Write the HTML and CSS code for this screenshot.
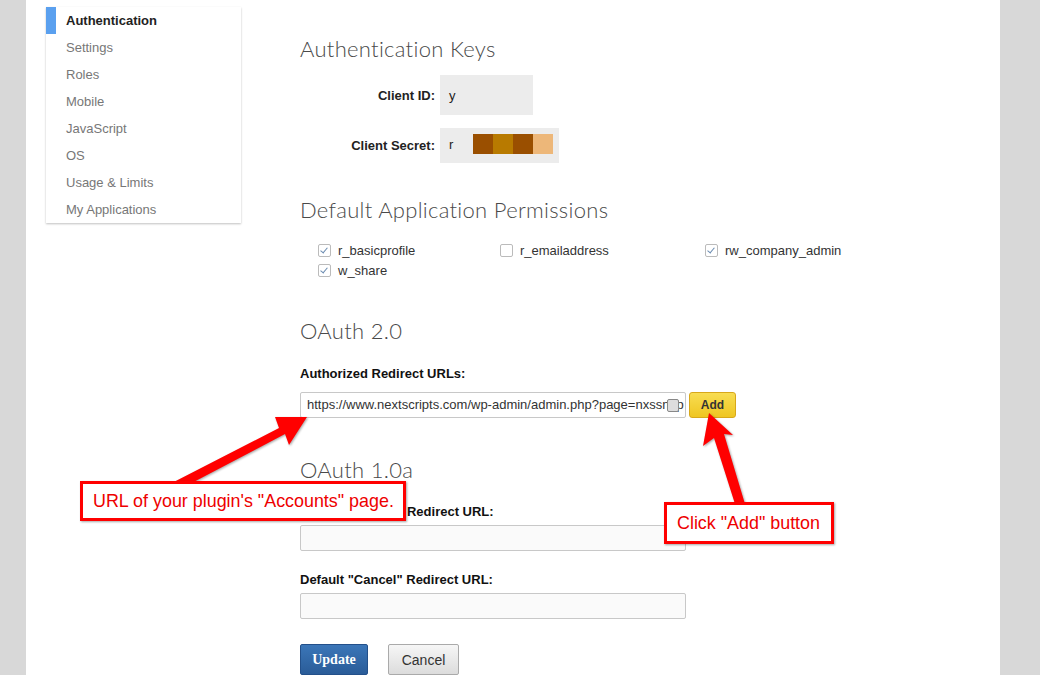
FILE: index.html
```html
<!DOCTYPE html>
<html lang="en">
<head>
  <meta charset="UTF-8">
  <title>Authentication</title>
  <link rel="stylesheet" href="styles.css">
</head>
<body>
  <div class="page">
    <!-- left menu -->
    <div class="sidebar">
      <a class="nav-item active">Authentication</a>
      <a class="nav-item">Settings</a>
      <a class="nav-item">Roles</a>
      <a class="nav-item">Mobile</a>
      <a class="nav-item">JavaScript</a>
      <a class="nav-item">OS</a>
      <a class="nav-item">Usage &amp; Limits</a>
      <a class="nav-item">My Applications</a>
    </div>

    <div class="main">
      <h2>Authentication Keys</h2>
      <div class="key-row">
        <span class="key-label">Client ID:</span>
        <div class="key-value id-value"><span class="masked">y</span></div>
      </div>
      <div class="key-row">
        <span class="key-label">Client Secret:</span>
        <div class="key-value secret-value">
          <span class="masked">r</span>
          <span class="px" style="background:#9a4f00"></span><span class="px" style="background:#b87a00"></span><span class="px" style="background:#9a4f00"></span><span class="px" style="background:#edb779"></span>
        </div>
      </div>

      <h2 class="perm-title">Default Application Permissions</h2>
      <div class="perms">
        <label class="perm"><span class="box checked"></span>r_basicprofile</label>
        <label class="perm"><span class="box"></span>r_emailaddress</label>
        <label class="perm"><span class="box checked"></span>rw_company_admin</label>
        <label class="perm"><span class="box checked"></span>w_share</label>
      </div>

      <h2 class="oauth2">OAuth 2.0</h2>
      <div class="field-label">Authorized Redirect URLs:</div>
      <div class="url-row">
        <div class="input filled">https://www.nextscripts.com/wp-admin/admin.php?page=nxssnap<span class="pick"></span></div>
        <button class="btn-add">Add</button>
      </div>

      <h2 class="oauth1">OAuth 1.0a</h2>
      <div class="field-label accept">Default "Accept" Redirect URL:</div>
      <div class="input"></div>
      <div class="field-label second">Default "Cancel" Redirect URL:</div>
      <div class="input"></div>

      <div class="actions">
        <button class="btn-update">Update</button>
        <button class="btn-cancel">Cancel</button>
      </div>
    </div>
  </div>

  <!-- annotations drawn over the screenshot -->
  <svg class="arrows" width="1040" height="675" viewBox="0 0 1040 675">
    <g fill="#ff0000" style="filter: drop-shadow(1px 1px 1px rgba(0,0,0,0.35))">
      <polygon points="166,486 279,428 275,417 307,417 289,445 285,434 186,486"/>
      <polygon points="709,413 733,435 724,434 745,504 735,504 714,438 703,446"/>
    </g>
  </svg>
  <div class="callout callout-url">URL of your plugin's "Accounts" page.</div>
  <div class="callout callout-add">Click "Add" button</div>
</body>
</html>
```

FILE: styles.css
```css
body {
  margin: 0;
  background: #d8d8d8;
  font-family: Arial, "Liberation Sans", sans-serif;
  font-size: 13px;
  color: #222;
  overflow: hidden;
}

.page {
  display: flex;
  align-items: flex-start;
  margin-left: 26px;
  width: 974px;
  height: 675px;
  background: #fff;
}

/* sidebar */
.sidebar {
  display: flex;
  flex-direction: column;
  width: 195px;
  margin: 7px 0 0 20px;
  background: #fff;
  box-shadow: 0 1px 2px rgba(0, 0, 0, 0.25);
}

.nav-item {
  height: 27px;
  line-height: 28px;
  font-size: 13px;
  color: #777;
  border-left: 10px solid transparent;
  padding-left: 10px;
}

.nav-item.active {
  color: #222;
  font-weight: bold;
  border-left-color: #5aa0ef;
}

/* main column */
.main {
  margin-left: 59px;
  width: 560px;
}

h2 {
  margin: 0;
  font-family: Lato, "Open Sans", sans-serif;
  font-weight: 300;
  font-size: 22px;
  color: #4a4a4a;
  letter-spacing: 0.3px;
}

.main > h2:first-child {
  margin-top: 35px;
}

.key-row {
  display: flex;
  align-items: center;
  margin-top: 13px;
}

.key-label {
  width: 135px;
  text-align: right;
  padding-right: 5px;
  font-weight: bold;
  font-size: 13px;
}

.key-value {
  display: flex;
  align-items: center;
  background: #ececec;
  font-size: 13px;
}

.masked {
  padding-left: 9px;
  width: 24px;
}

.id-value {
  width: 93px;
  height: 40px;
}

.secret-value {
  width: 119px;
  height: 35px;
  padding-bottom: 3px;
  box-sizing: border-box;
}

.px {
  width: 20px;
  height: 20px;
}

.perm-title {
  margin-top: 33px;
}

.perms {
  display: grid;
  grid-template-columns: 182px 205px 140px;
  padding: 19px 0 0 18px;
  row-gap: 4px;
}

.perm {
  display: flex;
  align-items: center;
  font-size: 13px;
  color: #333;
  height: 16px;
}

.box {
  width: 11px;
  height: 11px;
  border: 1px solid #bbb;
  border-radius: 2px;
  margin-right: 7px;
  position: relative;
}

.box.checked::after {
  content: "";
  position: absolute;
  left: 3px;
  top: 1px;
  width: 3px;
  height: 6px;
  border: solid #6a8bb0;
  border-width: 0 1px 1px 0;
  transform: rotate(40deg);
}

.oauth2 {
  margin-top: 39px;
}

.field-label {
  margin-top: 22px;
  font-weight: bold;
  font-size: 13px;
  color: #111;
}

.url-row {
  display: flex;
  align-items: center;
  margin-top: 11px;
}

.input {
  width: 384px;
  height: 24px;
  border: 1px solid #c8c8c8;
  border-radius: 2px;
  background: #fafafa;
  margin-top: 6px;
  box-sizing: content-box;
}

.url-row .input {
  margin-top: 0;
  background: #fff;
  position: relative;
  overflow: hidden;
  white-space: nowrap;
  line-height: 24px;
  padding-left: 6px;
  width: 378px;
  font-size: 13px;
  color: #333;
}

.pick {
  position: absolute;
  right: 6px;
  top: 6px;
  width: 10px;
  height: 11px;
  border: 1px solid #888;
  border-radius: 2px;
  background: #ddd;
}

.btn-add {
  margin-left: 3px;
  width: 47px;
  height: 26px;
  border: 1px solid #d8a81a;
  border-radius: 3px;
  background: linear-gradient(#f8dd52, #efc622);
  font-family: Arial, sans-serif;
  font-weight: bold;
  font-size: 12px;
  color: #333;
  padding: 0;
}

.oauth1 {
  margin-top: 38px;
}

.field-label.accept {
  margin-top: 21px;
}

.field-label.second {
  margin-top: 21px;
}

.actions {
  display: flex;
  gap: 20px;
  margin-top: 25px;
}

.btn-update {
  width: 68px;
  height: 31px;
  border: 1px solid #23508a;
  border-radius: 2px;
  background: linear-gradient(#3b76b8, #2a5c98);
  color: #fff;
  font-family: "Liberation Serif", serif;
  font-weight: bold;
  font-size: 14px;
  padding: 0;
}

.btn-cancel {
  width: 71px;
  height: 31px;
  border: 1px solid #aaa;
  border-radius: 2px;
  background: linear-gradient(#f6f6f6, #dcdcdc);
  color: #333;
  font-family: Arial, sans-serif;
  font-size: 14px;
  padding: 0;
}

/* annotation layer */
.arrows {
  position: absolute;
  left: 0;
  top: 0;
  pointer-events: none;
}

.callout {
  position: absolute;
  background: #fff;
  border: 3px solid #ff0000;
  color: #ee0000;
  font-family: "Liberation Sans", Arial, sans-serif;
  font-size: 17.9px;
  box-shadow: 1px 1px 2px rgba(0, 0, 0, 0.35);
  box-sizing: border-box;
  line-height: 34px;
  padding-left: 10px;
  white-space: nowrap;
}

.callout-url {
  left: 80px;
  top: 481px;
  width: 326px;
  height: 40px;
}

.callout-add {
  left: 664px;
  top: 502px;
  width: 170px;
  height: 42px;
  line-height: 36px;
}
```
